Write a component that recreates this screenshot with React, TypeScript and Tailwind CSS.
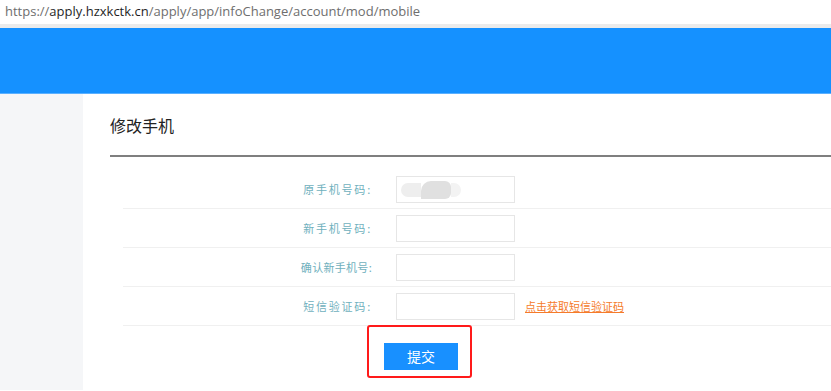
const rows = [
    { label: "原手机号码:", spaced: true, masked: true },
    { label: "新手机号码:", spaced: true },
    { label: "确认新手机号:", spaced: false },
    { label: "短信验证码:", spaced: true, sms: true },
];

const font = { fontFamily: '"Noto Sans CJK SC", "Open Sans", sans-serif' };

const App = () => {
    return (
        <div className="w-[831px] h-[391px] overflow-hidden bg-white" style={font}>
            {/* address bar */}
            <div className="h-[24px] flex items-center pl-[5px] text-[13px] text-[#6e6e6e] bg-white" style={{ fontFamily: '"Open Sans", "Liberation Sans", sans-serif' }}>
                https://<span className="text-[#1f1f1f]">apply.hzxkctk.cn</span>/apply/app/infoChange/account/mod/mobile
            </div>
            <div className="h-[4px] bg-[#ebebeb]" />
            {/* blue header */}
            <div className="h-[66px] bg-[#1591ff] border-b border-[#5ab0ff]" />

            <div className="flex h-[296px]">
                <div className="w-[83px] bg-[#f5f6f8]" />
                <div className="flex-1 pt-[19px]">
                    <h2 className="ml-[27px] text-[16px] leading-[24px] text-[#222]">修改手机</h2>
                    <div className="ml-[27px] mt-[18px] h-[2px] bg-[#7f7f7f]" />

                    <div className="ml-[40px] mt-[13px]">
                        {rows.map((r) => (
                            <div key={r.label} className="flex items-center h-[39px] border-b border-[#f0f0f0]">
                                <div
                                    className={
                                        "w-[249px] text-right text-[11px] text-[#6fb0bd] " +
                                        (r.spaced ? "tracking-[1.8px]" : "tracking-[0.3px]")
                                    }
                                >
                                    {r.label}
                                </div>
                                <div className="ml-[24px] w-[119px] h-[27px] border border-[#e6e6e6] bg-white relative overflow-hidden">
                                    {r.masked && (
                                        <div className="absolute left-[4px] top-[4px] flex items-center">
                                            <div className="w-[20px] h-[14px] rounded-l-full bg-[#eeeeee]" />
                                            <div className="w-[30px] h-[18px] rounded-tl-[10px] rounded-r-[6px] bg-[#e0e0e0]" />
                                            <div className="w-[10px] h-[14px] rounded-r-full bg-[#f3f3f3]" />
                                        </div>
                                    )}
                                </div>
                                {r.sms && (
                                    <a className="ml-[10px] text-[11px] text-[#f57b2b] underline cursor-pointer">
                                        点击获取短信验证码
                                    </a>
                                )}
                            </div>
                        ))}
                    </div>

                    <div className="flex ml-[301px] mt-[17px]">
                        <div className="relative">
                            <button className="w-[74px] h-[27px] bg-[#1890ff] text-white text-[14px]">
                                提交
                            </button>
                            <div className="absolute left-[-17px] top-[-18px] w-[105px] h-[53px] border-2 border-[#ff1a1a] rounded-[3px] pointer-events-none" />
                        </div>
                    </div>
                </div>
            </div>
        </div>
    );
};

export default App;
